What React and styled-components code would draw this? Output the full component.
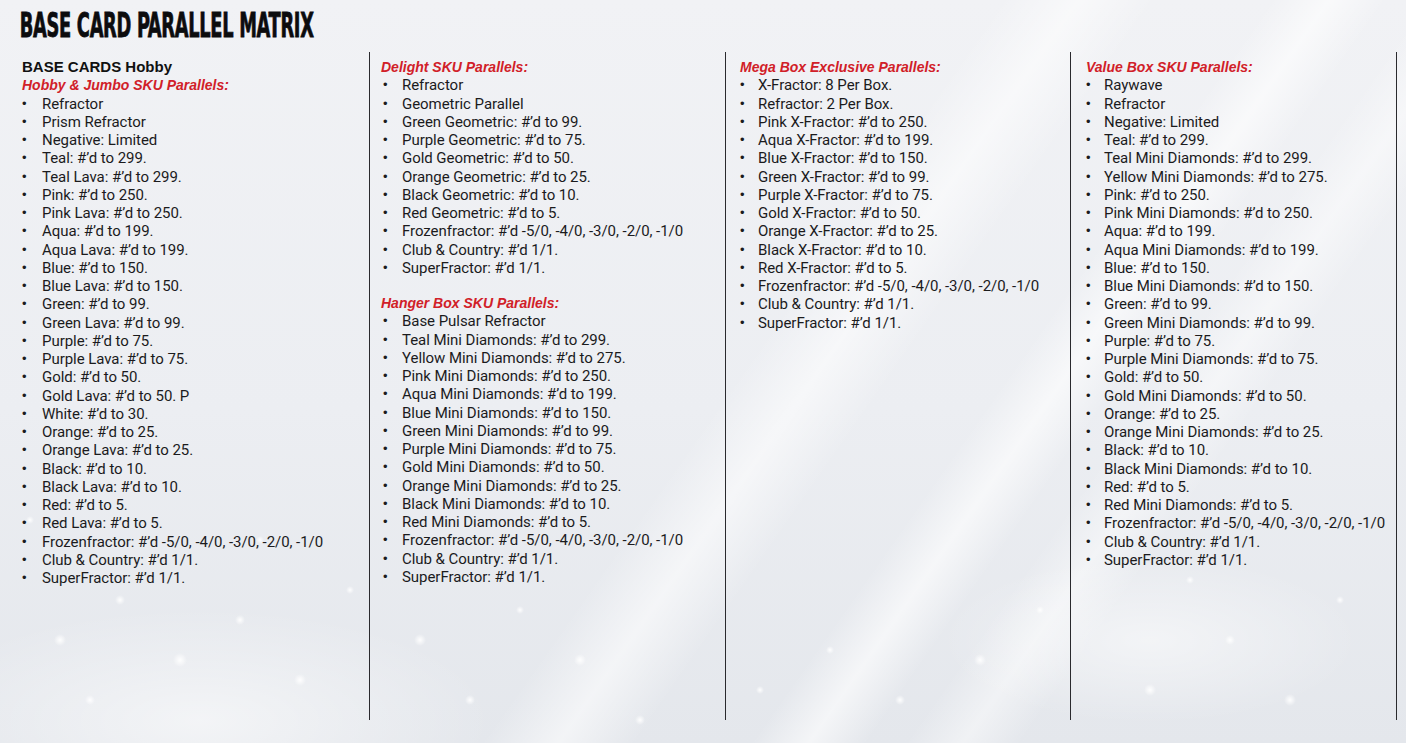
import React from "react";
import styled, { createGlobalStyle } from "styled-components";

const GlobalStyle = createGlobalStyle`
  html, body { margin: 0; padding: 0; }
  body {
    width: 1406px;
    height: 743px;
    overflow: hidden;
    font-family: Roboto, "Liberation Sans", Arial, sans-serif;
    color: #1b1b1d;
  }
`;

const sparkle = (x, y, r) =>
  `radial-gradient(circle ${r}px at ${x}px ${y}px, rgba(255,255,255,0.95), rgba(255,255,255,0) 100%)`;

const sparkles = [
  [60, 640, 6], [120, 600, 5], [180, 660, 7], [240, 620, 5], [300, 680, 6],
  [350, 590, 4], [90, 700, 5], [420, 640, 6], [470, 700, 5], [520, 610, 4],
  [580, 660, 6], [640, 720, 5], [150, 560, 4], [30, 520, 4], [260, 540, 4],
  [900, 700, 5], [980, 660, 6], [1040, 610, 4], [1150, 690, 6], [1230, 640, 5],
  [1290, 700, 6], [1340, 600, 4], [1190, 580, 4], [760, 690, 4], [830, 650, 4],
].map(([x, y, r]) => sparkle(x, y, r)).join(",\n    ");

const Slide = styled.div`
  position: relative;
  width: 1406px;
  height: 743px;
  overflow: hidden;
  background:
    ${sparkles},
    radial-gradient(ellipse 420px 160px at 200px 720px, rgba(255,255,255,0.55), rgba(255,255,255,0) 70%),
    radial-gradient(ellipse 300px 120px at 1150px 640px, rgba(255,255,255,0.5), rgba(255,255,255,0) 70%),
    linear-gradient(125deg, rgba(255,255,255,0) 52%, rgba(255,255,255,0.55) 56%, rgba(255,255,255,0) 60%),
    linear-gradient(125deg, rgba(255,255,255,0) 66%, rgba(255,255,255,0.6) 69%, rgba(255,255,255,0) 72%),
    linear-gradient(125deg, rgba(255,255,255,0) 74%, rgba(255,255,255,0.45) 77%, rgba(255,255,255,0) 80%),
    linear-gradient(180deg, #f1f2f5 0%, #eceef2 55%, #e4e7ec 100%);
  display: flex;
  flex-direction: column;
`;

const Title = styled.h1`
  margin: 0;
  padding: 9px 0 0 33px;
  height: 46px;
  box-sizing: border-box;
  font-family: "DejaVu Sans Condensed", "DejaVu Sans", sans-serif;
  font-weight: 900;
  font-size: 33px;
  line-height: 34px;
  letter-spacing: -0.5px;
  color: #0c0c0e;
  -webkit-text-stroke: 0.8px #0c0c0e;
  transform: scaleX(0.6);
  transform-origin: left center;
  white-space: nowrap;
`;

const Grid = styled.div`
  display: grid;
  grid-template-columns: 369px 356px 345px 327px;
  height: 668px;
  margin-top: 6px;
`;

const Column = styled.div`
  padding: 6px 0 0 ${(p) => p.$pad}px;
  border-left: ${(p) => (p.$rule ? "1.5px solid #2a2a2e" : "none")};
  border-right: ${(p) => (p.$last ? "1.5px solid #2a2a2e" : "none")};
  font-size: 15px;
  line-height: 18.25px;
`;

const BoxTitle = styled.div`
  font-family: "Liberation Sans", Arial, sans-serif;
  font-weight: 700;
  font-size: 15px;
  line-height: 18.25px;
  color: #111;
`;

const SkuTitle = styled.div`
  font-family: "Liberation Sans", Arial, sans-serif;
  font-weight: 700;
  font-style: italic;
  font-size: 14px;
  line-height: 18.25px;
  color: #d12028;
  margin-top: ${(p) => p.$gap || 0}px;
`;

const List = styled.ul`
  list-style: none;
  margin: 0;
  padding: 0;
`;

const Item = styled.li`
  display: flex;
  white-space: nowrap;
  letter-spacing: -0.05px;
  &::before {
    content: "•";
    flex: 0 0 ${(p) => p.$indent}px;
    padding-left: ${(p) => p.$bx}px;
    box-sizing: border-box;
    font-family: "Liberation Sans", Arial, sans-serif;
    font-size: 13px;
  }
`;

const hobby = [
  "Refractor",
  "Prism Refractor",
  "Negative: Limited",
  "Teal: #’d to 299.",
  "Teal Lava: #’d to 299.",
  "Pink: #’d to 250.",
  "Pink Lava: #’d to 250.",
  "Aqua: #’d to 199.",
  "Aqua Lava: #’d to 199.",
  "Blue: #’d to 150.",
  "Blue Lava: #’d to 150.",
  "Green: #’d to 99.",
  "Green Lava: #’d to 99.",
  "Purple: #’d to 75.",
  "Purple Lava: #’d to 75.",
  "Gold: #’d to 50.",
  "Gold Lava: #’d to 50. P",
  "White: #’d to 30.",
  "Orange: #’d to 25.",
  "Orange Lava: #’d to 25.",
  "Black: #’d to 10.",
  "Black Lava: #’d to 10.",
  "Red: #’d to 5.",
  "Red Lava: #’d to 5.",
  "Frozenfractor: #’d -5/0, -4/0, -3/0, -2/0, -1/0",
  "Club & Country: #’d 1/1.",
  "SuperFractor: #’d 1/1.",
];

const delight = [
  "Refractor",
  "Geometric Parallel",
  "Green Geometric: #’d to 99.",
  "Purple Geometric: #’d to 75.",
  "Gold Geometric: #’d to 50.",
  "Orange Geometric: #’d to 25.",
  "Black Geometric: #’d to 10.",
  "Red Geometric: #’d to 5.",
  "Frozenfractor: #’d -5/0, -4/0, -3/0, -2/0, -1/0",
  "Club & Country: #’d 1/1.",
  "SuperFractor: #’d 1/1.",
];

const hanger = [
  "Base Pulsar Refractor",
  "Teal Mini Diamonds: #’d to 299.",
  "Yellow Mini Diamonds: #’d to 275.",
  "Pink Mini Diamonds: #’d to 250.",
  "Aqua Mini Diamonds: #’d to 199.",
  "Blue Mini Diamonds: #’d to 150.",
  "Green Mini Diamonds: #’d to 99.",
  "Purple Mini Diamonds: #’d to 75.",
  "Gold Mini Diamonds: #’d to 50.",
  "Orange Mini Diamonds: #’d to 25.",
  "Black Mini Diamonds: #’d to 10.",
  "Red Mini Diamonds: #’d to 5.",
  "Frozenfractor: #’d -5/0, -4/0, -3/0, -2/0, -1/0",
  "Club & Country: #’d 1/1.",
  "SuperFractor: #’d 1/1.",
];

const mega = [
  "X-Fractor: 8 Per Box.",
  "Refractor: 2 Per Box.",
  "Pink X-Fractor: #’d to 250.",
  "Aqua X-Fractor: #’d to 199.",
  "Blue X-Fractor: #’d to 150.",
  "Green X-Fractor: #’d to 99.",
  "Purple X-Fractor: #’d to 75.",
  "Gold X-Fractor: #’d to 50.",
  "Orange X-Fractor: #’d to 25.",
  "Black X-Fractor: #’d to 10.",
  "Red X-Fractor: #’d to 5.",
  "Frozenfractor: #’d -5/0, -4/0, -3/0, -2/0, -1/0",
  "Club & Country: #’d 1/1.",
  "SuperFractor: #’d 1/1.",
];

const value = [
  "Raywave",
  "Refractor",
  "Negative: Limited",
  "Teal: #’d to 299.",
  "Teal Mini Diamonds: #’d to 299.",
  "Yellow Mini Diamonds: #’d to 275.",
  "Pink: #’d to 250.",
  "Pink Mini Diamonds: #’d to 250.",
  "Aqua: #’d to 199.",
  "Aqua Mini Diamonds: #’d to 199.",
  "Blue: #’d to 150.",
  "Blue Mini Diamonds: #’d to 150.",
  "Green: #’d to 99.",
  "Green Mini Diamonds: #’d to 99.",
  "Purple: #’d to 75.",
  "Purple Mini Diamonds: #’d to 75.",
  "Gold: #’d to 50.",
  "Gold Mini Diamonds: #’d to 50.",
  "Orange: #’d to 25.",
  "Orange Mini Diamonds: #’d to 25.",
  "Black: #’d to 10.",
  "Black Mini Diamonds: #’d to 10.",
  "Red: #’d to 5.",
  "Red Mini Diamonds: #’d to 5.",
  "Frozenfractor: #’d -5/0, -4/0, -3/0, -2/0, -1/0",
  "Club & Country: #’d 1/1.",
  "SuperFractor: #’d 1/1.",
];

const Bullets = ({ items, indent, bx }) => (
  <List>
    {items.map((t) => (
      <Item key={t} $indent={indent} $bx={bx}>
        {t}
      </Item>
    ))}
  </List>
);

export default function App() {
  return (
    <>
      <GlobalStyle />
      <Slide>
        <Title>BASE CARD PARALLEL MATRIX</Title>
        <Grid>
          <Column $pad={22}>
            <BoxTitle>BASE CARDS Hobby</BoxTitle>
            <SkuTitle>Hobby &amp; Jumbo SKU Parallels:</SkuTitle>
            <Bullets items={hobby} indent={20} bx={0} />
          </Column>
          <Column $pad={11} $rule>
            <SkuTitle>Delight SKU Parallels:</SkuTitle>
            <Bullets items={delight} indent={21} bx={2} />
            <SkuTitle $gap={17}>Hanger Box SKU Parallels:</SkuTitle>
            <Bullets items={hanger} indent={21} bx={2} />
          </Column>
          <Column $pad={14} $rule>
            <SkuTitle>Mega Box Exclusive Parallels:</SkuTitle>
            <Bullets items={mega} indent={18} bx={0} />
          </Column>
          <Column $pad={15} $rule $last>
            <SkuTitle>Value Box SKU Parallels:</SkuTitle>
            <Bullets items={value} indent={18} bx={0} />
          </Column>
        </Grid>
      </Slide>
    </>
  );
}
